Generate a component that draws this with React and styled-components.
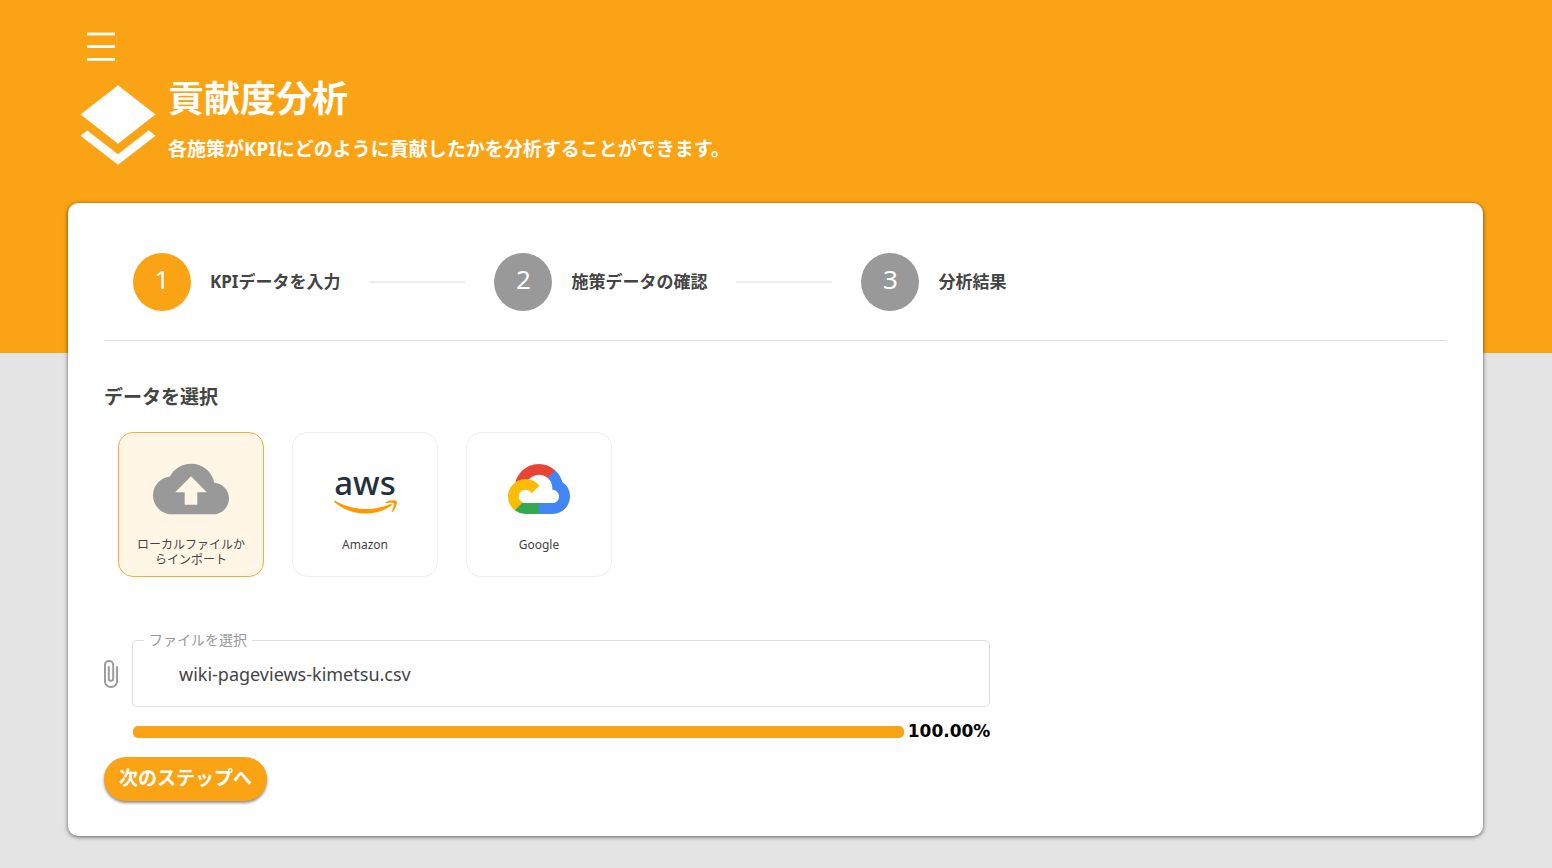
/**
 * App - contribution analysis, step 1: choosing the KPI data source
 */

import React, { useState } from 'react';
import styled, { createGlobalStyle } from 'styled-components';
import { MdCloudUpload, MdLayers } from 'react-icons/md';

const GlobalStyle = createGlobalStyle`
  * {
    box-sizing: border-box;
  }

  body {
    margin: 0;
    background: #e4e4e4;
    color: #444;
    font-family: 'Noto Sans', 'Noto Sans CJK JP', sans-serif;
  }

  button,
  input {
    font-family: inherit;
    color: inherit;
  }
`;

const Page = styled.div`
  min-height: 100vh;
  padding: 32px 69px 32px 68px;
  background: linear-gradient(#faa314 353px, #e4e4e4 353px);
`;

const MenuButton = styled.button`
  display: block;
  margin: 0 0 0 19px;
  padding: 0;
  border: none;
  background: none;
  color: #fff;
  line-height: 0;
  cursor: pointer;
`;

const Header = styled.header`
  display: flex;
  margin-top: 15px;
  color: #fff;
`;

const HeaderText = styled.div`
  padding-top: 2px;

  h1 {
    margin: 0;
    font-size: 36px;
    line-height: 40px;
  }

  p {
    margin: 16px 0 0;
    font-size: 19px;
    font-weight: 700;
    line-height: 28px;
  }
`;

const Card = styled.main`
  margin-top: 26px;
  padding: 50px 36px 35px;
  background: #fff;
  border-radius: 10px;
  box-shadow: 0 1px 4px rgba(0, 0, 0, 0.6);
`;

const Stepper = styled.ol`
  display: flex;
  align-items: center;
  gap: 29px;
  margin: 0;
  padding: 0 29px 29px;
  border-bottom: 1px solid #ddd;
  list-style: none;
`;

const Step = styled.li`
  display: flex;
  align-items: center;
  gap: 19px;
  white-space: nowrap;

  &:not(:last-child)::after {
    content: '';
    width: 96px;
    height: 2px;
    margin-left: 10px;
    background: #ececec;
  }
`;

const StepNumber = styled.span`
  width: 58px;
  height: 58px;
  border-radius: 50%;
  background: ${props => (props.$active ? '#faa314' : '#999')};
  color: #fff;
  font-size: 26px;
  line-height: 53px;
  text-align: center;
`;

const StepLabel = styled.span`
  padding-bottom: 4px;
  font-size: 17px;
  font-weight: 700;
`;

const SectionTitle = styled.h2`
  margin: 42px 0 21px;
  font-size: 19px;
  line-height: 28px;
`;

const SourceList = styled.div`
  display: flex;
  flex-wrap: wrap;
  gap: 28px;
  padding: 0 14px;
`;

const SourceButton = styled.button`
  display: flex;
  flex-direction: column;
  align-items: center;
  width: 146px;
  height: 145px;
  padding: 18px 17px 0;
  border: 1px solid ${props => (props.$selected ? '#efae3c' : '#eee')};
  border-radius: 15px;
  background: ${props => (props.$selected ? '#fff6e6' : '#fff')};
  font-size: 12px;
  line-height: 15px;
  cursor: pointer;
`;

const SourceIcon = styled.span`
  display: flex;
  align-items: center;
  justify-content: center;
  height: 76px;
  margin-bottom: 10px;
  color: #999;
`;

const Upload = styled.div`
  width: 66%;
  margin-top: 63px;
`;

const FileRow = styled.div`
  display: flex;
  align-items: center;
  gap: 14px;
  color: #999;
`;

const Field = styled.div`
  position: relative;
  flex: 1;
`;

const FieldLabel = styled.label`
  position: absolute;
  top: -10px;
  left: 12px;
  padding: 0 5px;
  background: #fff;
  font-size: 14px;
  line-height: 20px;
`;

const FileInput = styled.input`
  display: block;
  width: 100%;
  height: 67px;
  padding: 0 46px;
  border: 1px solid #ddd;
  border-radius: 5px;
  background: #fff;
  color: #444;
  font-size: 18px;
`;

const ProgressRow = styled.div`
  display: flex;
  align-items: center;
  gap: 4px;
  margin: 13px 0 0 29px;
`;

const ProgressTrack = styled.div`
  flex: 1;
  height: 12px;
  border-radius: 5px;
  background: #eee;
`;

const ProgressBar = styled.div`
  height: 100%;
  border-radius: 5px;
  background: #faa314;
`;

const ProgressValue = styled.span`
  padding-bottom: 2px;
  color: #000;
  font-family: 'DejaVu Sans', sans-serif;
  font-size: 17px;
  font-weight: 700;
  line-height: 22px;
`;

const NextButton = styled.button`
  display: block;
  height: 44px;
  margin-top: 13px;
  padding: 0 15px 5px;
  border: none;
  border-radius: 22px;
  background: #faa314;
  box-shadow: 0 2px 3px rgba(0, 0, 0, 0.45);
  color: #fff;
  font-size: 19px;
  font-weight: 700;
  cursor: pointer;
`;

function MenuIcon() {
  return (
    <svg width="28" height="30" viewBox="0 0 28 30" fill="currentColor">
      <rect y="0.6" width="28" height="2.8" />
      <rect y="13.2" width="28" height="2.8" />
      <rect y="26" width="28" height="2.8" />
    </svg>
  );
}

function ClipIcon() {
  return (
    <svg width="14" height="28" viewBox="7 1 11 22" fill="currentColor">
      <path d="M16.5 6v11.5c0 2.21-1.79 4-4 4s-4-1.79-4-4V5a2.5 2.5 0 0 1 5 0v10.5c0 .55-.45 1-1 1s-1-.45-1-1V6H10v9.5a2.5 2.5 0 0 0 5 0V5c0-2.21-1.79-4-4-4S7 2.79 7 5v12.5c0 3.04 2.46 5.5 5.5 5.5s5.5-2.46 5.5-5.5V6h-1.5z" />
    </svg>
  );
}

function AwsLogo() {
  return (
    <svg width="66" height="66" viewBox="-1 -8 66 66">
      <text
        x="32"
        y="31"
        textAnchor="middle"
        fill="#252f3e"
        fontFamily="'Noto Sans', sans-serif"
        fontSize="33"
        fontWeight="500"
      >
        aws
      </text>
      <g fill="#f90">
        <path d="M1 37C1.400 36.200 2 36.600 3 37.200C20 46.500 40 47.500 57 40.200C58.600 39.600 59.600 40.800 58.200 41.800C42 53.200 18 52.200 1.500 38.200Z" />
        <path d="M52.400 38.400C55.400 36 62.600 35.600 63.600 37C64.500 38.400 63 44.800 59.600 47.800C59 48.300 58.500 48 58.800 47.300C59.700 45 61.500 40.400 60.600 39.300C59.700 38.200 55.100 38.800 52.800 39.200C52 39.300 51.900 38.800 52.400 38.400Z" />
      </g>
    </svg>
  );
}

function GoogleCloudLogo() {
  return (
    <svg width="62" height="50" viewBox="0 0 256 206">
      <path fill="#ea4335" d="M170.252 56.819l22.253-22.253 1.483-9.37C153.437-11.677 88.976-7.496 52.42 33.92 42.267 45.423 34.734 59.764 30.717 74.573l7.97-1.123 44.505-7.34 3.436-3.513c19.797-21.742 53.27-24.667 76.128-6.168l7.496.39z" />
      <path fill="#4285f4" d="M224.205 73.918a100.249 100.249 0 0 0-30.217-48.722l-31.232 31.232a55.515 55.515 0 0 1 20.379 44.037v5.544c15.35 0 27.797 12.445 27.797 27.796 0 15.352-12.446 27.485-27.797 27.485h-55.671l-5.466 5.934v33.34l5.466 5.231h55.67c39.93.311 72.553-31.494 72.864-71.424a72.303 72.303 0 0 0-31.793-60.453" />
      <path fill="#34a853" d="M71.87 205.796h55.593V161.29H71.87a27.275 27.275 0 0 1-11.4-2.498l-7.887 2.42-22.409 22.253-1.952 7.574a72.2 72.2 0 0 0 43.65 14.757" />
      <path fill="#fbbc05" d="M71.87 61.425C31.94 61.663-.237 94.228.001 134.158a72.301 72.301 0 0 0 28.222 56.88l32.248-32.246c-13.99-6.322-20.208-22.786-13.887-36.776 6.32-13.99 22.786-20.208 36.775-13.888a27.796 27.796 0 0 1 13.887 13.888l32.248-32.248A72.224 72.224 0 0 0 71.87 61.425" />
    </svg>
  );
}

const steps = ['KPIデータを入力', '施策データの確認', '分析結果'];

const sources = [
  { id: 'local', label: 'ローカルファイルからインポート', icon: <MdCloudUpload size={76} /> },
  { id: 'amazon', label: 'Amazon', icon: <AwsLogo /> },
  { id: 'google', label: 'Google', icon: <GoogleCloudLogo /> }
];

function App() {
  const [source, setSource] = useState('local');
  const progress = 100;

  return (
    <Page>
      <GlobalStyle />
      <MenuButton type="button" aria-label="メニュー">
        <MenuIcon />
      </MenuButton>

      <Header>
        <MdLayers size={100} />
        <HeaderText>
          <h1>貢献度分析</h1>
          <p>各施策がKPIにどのように貢献したかを分析することができます。</p>
        </HeaderText>
      </Header>

      <Card>
        <Stepper>
          {steps.map((label, index) => (
            <Step key={label}>
              <StepNumber $active={index === 0}>{index + 1}</StepNumber>
              <StepLabel>{label}</StepLabel>
            </Step>
          ))}
        </Stepper>

        <SectionTitle>データを選択</SectionTitle>
        <SourceList>
          {sources.map(({ id, label, icon }) => (
            <SourceButton
              key={id}
              type="button"
              $selected={source === id}
              aria-pressed={source === id}
              onClick={() => setSource(id)}
            >
              <SourceIcon>{icon}</SourceIcon>
              {label}
            </SourceButton>
          ))}
        </SourceList>

        <Upload>
          <FileRow>
            <ClipIcon />
            <Field>
              <FieldLabel htmlFor="file">ファイルを選択</FieldLabel>
              <FileInput id="file" type="text" readOnly value="wiki-pageviews-kimetsu.csv" />
            </Field>
          </FileRow>
          <ProgressRow>
            <ProgressTrack>
              <ProgressBar style={{ width: `${progress}%` }} />
            </ProgressTrack>
            <ProgressValue>{progress.toFixed(2)}%</ProgressValue>
          </ProgressRow>
        </Upload>

        <NextButton type="button">次のステップへ</NextButton>
      </Card>
    </Page>
  );
}

export default App;
